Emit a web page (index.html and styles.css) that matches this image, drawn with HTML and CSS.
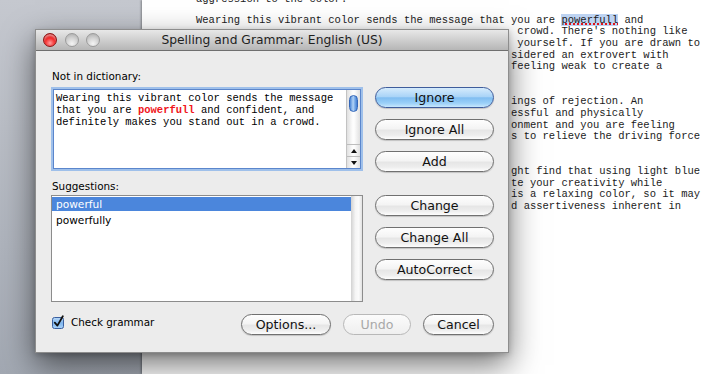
FILE: index.html
```html
<!DOCTYPE html>
<html lang="en">
<head>
<meta charset="UTF-8">
<title>Spelling and Grammar</title>
<link rel="stylesheet" href="styles.css">
</head>
<body>

<div class="desktop">
    <div class="sidebar"></div>
    <div class="page">
        <div class="doc">
            <div class="ln">aggression to the color.</div>
            <div class="ln short"></div>
            <div class="ln">Wearing this vibrant color sends the message that you are <span class="misspelled">powerfull</span> and</div>
            <div class="ln c51">crowd. There's nothing like</div>
            <div class="ln c51">yourself. If you are drawn to</div>
            <div class="ln c50">sidered an extrovert with</div>
            <div class="ln c50">feeling weak to create a</div>
            <div class="ln"></div>
            <div class="ln"></div>
            <div class="ln c50">ings of rejection. An</div>
            <div class="ln c50">essful and physically</div>
            <div class="ln c50">onment and you are feeling</div>
            <div class="ln c50">s to relieve the driving force</div>
            <div class="ln"></div>
            <div class="ln"></div>
            <div class="ln c50">ght find that using light blue</div>
            <div class="ln c50">te your creativity while</div>
            <div class="ln c50">is a relaxing color, so it may</div>
            <div class="ln c50">d assertiveness inherent in</div>
        </div>
    </div>

    <div class="dialog">
        <div class="titlebar">
            <div class="lights">
                <span class="light close"></span>
                <span class="light off"></span>
                <span class="light off"></span>
            </div>
            <div class="title">Spelling and Grammar: English (US)</div>
            <div></div>
        </div>

        <div class="content">
            <div class="main">
                <div class="left">
                    <div class="label first">Not in dictionary:</div>
                    <div class="textbox">
                        <div class="textbox-inner">
                            <div class="tb-text">
                                <div>Wearing this vibrant color sends the message</div>
                                <div>that you are <b class="bad">powerfull</b> and confident, and</div>
                                <div>definitely makes you stand out in a crowd.</div>
                            </div>
                            <div class="tb-scroll">
                                <div class="thumb"></div>
                                <div class="track"></div>
                                <div class="arrow">
                                    <svg width="6" height="4" viewBox="0 0 6 4"><path d="M3 0 L6 4 L0 4 Z" fill="#111"/></svg>
                                </div>
                                <div class="arrow">
                                    <svg width="6" height="4" viewBox="0 0 6 4"><path d="M0 0 L6 0 L3 4 Z" fill="#111"/></svg>
                                </div>
                            </div>
                        </div>
                    </div>

                    <div class="label">Suggestions:</div>
                    <div class="list">
                        <div class="list-items">
                            <div class="item selected">powerful</div>
                            <div class="item">powerfully</div>
                        </div>
                        <div class="list-scroll"></div>
                    </div>
                </div>

                <div class="right">
                    <button class="btn default">Ignore</button>
                    <button class="btn">Ignore All</button>
                    <button class="btn">Add</button>
                    <button class="btn group">Change</button>
                    <button class="btn">Change All</button>
                    <button class="btn">AutoCorrect</button>
                </div>
            </div>

            <div class="bottom">
                <div class="check">
                    <svg width="13" height="14" viewBox="0 0 13 14">
                        <defs>
                            <linearGradient id="cb" x1="0" y1="0" x2="0" y2="1">
                                <stop offset="0" stop-color="#b9d9f8"/>
                                <stop offset="0.5" stop-color="#7fb5ee"/>
                                <stop offset="1" stop-color="#a9d3fa"/>
                            </linearGradient>
                        </defs>
                        <rect x="0.5" y="2.5" width="11" height="11" rx="2" fill="url(#cb)" stroke="#3a5f9f"/>
                        <path d="M2.8 7.6 L5.4 10.6 L10.8 1.2" fill="none" stroke="#111" stroke-width="1.8" stroke-linecap="round" stroke-linejoin="round"/>
                    </svg>
                    <span>Check grammar</span>
                </div>
                <div class="spacer"></div>
                <button class="btn options">Options...</button>
                <button class="btn undo disabled">Undo</button>
                <button class="btn cancel">Cancel</button>
            </div>
        </div>
    </div>
</div>

</body>
</html>
```

FILE: styles.css
```css
* {
    box-sizing: border-box;
}
body {
    margin: 0;
    width: 717px;
    height: 374px;
    overflow: hidden;
    font-family: "DejaVu Sans", sans-serif;
}
.desktop {
    position: relative;
    display: flex;
    height: 374px;
    overflow: hidden;
}
.sidebar {
    width: 142px;
    background: linear-gradient(#c5c8cf, #a2a8b2);
}
.page {
    flex: 1;
    background: #fff;
    box-shadow: -1px 0 2px rgba(0, 0, 0, 0.35);
    overflow: hidden;
}

/* document text behind the dialog */
.doc {
    margin: -6.3px 0 0 54px;
    font: 10.5px/11.65px "Liberation Mono", monospace;
    color: #1c1c1c;
}
.ln {
    height: 11.65px;
    white-space: nowrap;
}
.ln.short {
    height: 9.5px;
}
.c50 {
    padding-left: 50ch;
}
.c51 {
    padding-left: 51ch;
}
.misspelled {
    background: #bdd3f2;
    text-decoration: underline dotted #e0141a;
    text-decoration-thickness: 1.5px;
    text-underline-offset: 1px;
}

/* dialog window */
.dialog {
    position: absolute;
    left: 35px;
    top: 29px;
    width: 474px;
    height: 324px;
    background: #ececec;
    border: 1px solid #8d8d8d;
    box-shadow: 0 12px 30px rgba(0, 0, 0, 0.55), 0 2px 6px rgba(0, 0, 0, 0.2);
    display: flex;
    flex-direction: column;
}
.titlebar {
    height: 21px;
    border-bottom: 1px solid #6f6f6f;
    background: linear-gradient(#e8e8e8, #b6b6b6);
    display: grid;
    grid-template-columns: 1fr auto 1fr;
    align-items: center;
}
.lights {
    display: flex;
    gap: 7.5px;
    padding-left: 7px;
}
.light {
    width: 14px;
    height: 14px;
    border-radius: 50%;
}
.light.close {
    background: radial-gradient(circle at 50% 75%, #ff9c9c 0%, #f42a2a 45%, #b10808 100%);
    border: 1px solid #8a1616;
    box-shadow: inset 0 2px 2px rgba(255, 255, 255, 0.5);
}
.light.off {
    background: radial-gradient(circle at 50% 80%, #f4f4f4 0%, #d2d2d2 50%, #a8a8a8 100%);
    border: 1px solid #9b9b9b;
}
.title {
    font-size: 12.3px;
    color: #1f1f1f;
    line-height: 20px;
}

.content {
    flex: 1;
    padding: 0 14px 17px 15px;
    display: flex;
    flex-direction: column;
}
.main {
    display: flex;
    gap: 12px;
}
.left {
    width: 312px;
}
.label {
    margin-top: 8px;
    height: 14px;
    line-height: 14px;
    font-size: 10.4px;
    padding-left: 1px;
    color: #000;
}
.label.first {
    margin-top: 18px;
}
.textbox {
    margin-top: 4px;
    height: 84px;
    border: 2px solid #9fc0ea;
}
.textbox-inner {
    height: 100%;
    border: 1px solid #5b86cc;
    background: #fff;
    display: flex;
}
.tb-text {
    flex: 1;
    padding: 2px 0 0 2px;
    font: 10.5px/12.2px "Liberation Mono", monospace;
    color: #000;
    white-space: nowrap;
}
.bad {
    color: #f0141a;
}
.tb-scroll {
    width: 14px;
    border-left: 1px solid #c3c3c3;
    display: flex;
    flex-direction: column;
    background: linear-gradient(to right, #e0e0e0, #fdfdfd 45%, #fdfdfd 55%, #e0e0e0);
}
.thumb {
    margin: 5px 2px 0;
    height: 17px;
    border-radius: 5px;
    border: 1px solid #3467b8;
    background: linear-gradient(to right, #4a85d6, #b3d4f7 45%, #8ab8ee 60%, #3f7cd2);
}
.track {
    flex: 1;
}
.arrow {
    height: 12px;
    border-top: 1px solid #bdbdbd;
    display: flex;
    align-items: center;
    justify-content: center;
}

.list {
    margin-top: 2px;
    height: 107px;
    border: 1px solid #8c8c8c;
    background: #fff;
    display: flex;
}
.list-items {
    flex: 1;
    padding-top: 1px;
    display: flex;
    flex-direction: column;
    gap: 2px;
}
.item {
    height: 14px;
    line-height: 14px;
    padding-left: 4px;
    font-size: 10.6px;
    color: #000;
}
.item.selected {
    background: #4b86dc;
    color: #fff;
}
.list-scroll {
    width: 11px;
    background: linear-gradient(to right, #d2d2d2, #f5f5f5 40%, #fbfbfb 70%, #e2e2e2);
}

.right {
    width: 119px;
    padding-top: 36px;
    display: flex;
    flex-direction: column;
    gap: 11px;
}
.btn {
    height: 21px;
    padding: 0;
    border: 1px solid #707070;
    border-radius: 11px;
    background: linear-gradient(#fefefe 0%, #f4f4f4 45%, #e6e6e6 55%, #eeeeee 80%, #fdfdfd 100%);
    box-shadow: 0 1px 1px rgba(0, 0, 0, 0.18);
    font: 12.6px/19px "DejaVu Sans", sans-serif;
    text-align: center;
    color: #111;
}
.btn.default {
    border-color: #3f5d9c;
    background: linear-gradient(#d5ebfc 0%, #aad4f7 45%, #80bdf1 52%, #9bd0f8 80%, #c7e7fd 100%);
}
.btn.disabled {
    border-color: #b8b8b8;
    color: #a8a8a8;
    background: linear-gradient(#fbfbfb, #efefef);
    box-shadow: none;
}
.btn.group {
    margin-top: 12px;
}

.bottom {
    margin-top: 12px;
    height: 21px;
    display: flex;
    align-items: center;
    gap: 12px;
}
.check {
    display: flex;
    align-items: center;
    gap: 6px;
    margin-top: -5px;
    padding-left: 1px;
    font-size: 10.4px;
    color: #000;
}
.spacer {
    flex: 1;
}
.btn.options {
    width: 90px;
}
.btn.undo {
    width: 68px;
}
.btn.cancel {
    width: 71px;
}
```
